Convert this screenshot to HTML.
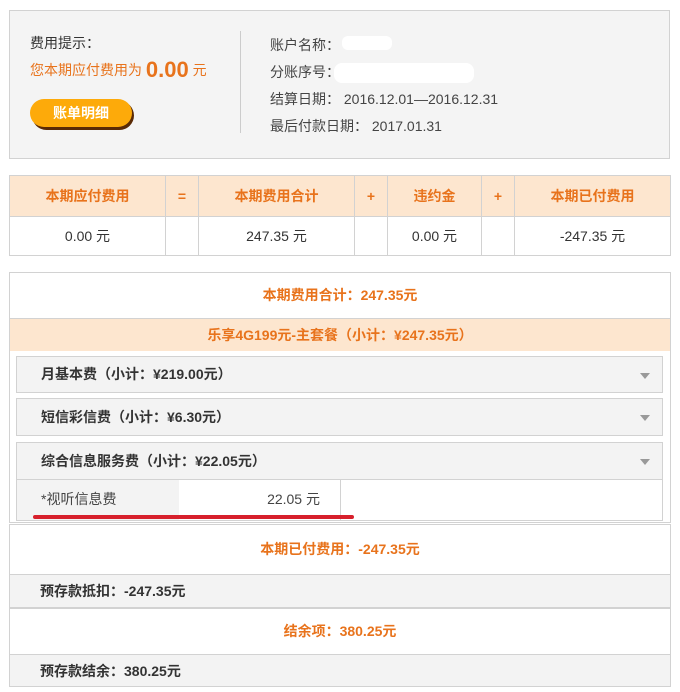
<!DOCTYPE html>
<html><head><meta charset="utf-8"><style>
*{margin:0;padding:0;box-sizing:border-box}
body{width:680px;height:692px;background:#fff;font-family:"Liberation Sans","Noto Sans CJK SC",sans-serif;font-size:14px;color:#333;position:relative;overflow:hidden}
.a{position:absolute}
.or{color:#e8731c}
.b{font-weight:bold}
.top{left:9px;top:10px;width:661px;height:149px;background:#f4f4f4;border:1px solid #d2d2d2}
table{border-collapse:collapse;position:absolute;left:9px;top:175px;width:662px}
td{border:1px solid #d2d2d2;text-align:center;font-size:14px}
tr.h td{background:#fde6cf;color:#e8731c;font-weight:bold;height:41px}
tr.v td{height:39px;color:#333}
.box{left:9px;width:662px;border:1px solid #d2d2d2}
.row{position:absolute;left:0;right:0;text-align:center;font-weight:bold;color:#e8731c;font-size:14px}
.acc{position:absolute;left:16px;width:647px;background:#f3f3f3;border:1px solid #d2d2d2;font-weight:bold;font-size:14px;color:#333;padding-left:24px}
.tri{position:absolute;right:12px;top:16px;width:0;height:0;border-left:5px solid transparent;border-right:5px solid transparent;border-top:6px solid #999}
.gr{position:absolute;left:0;right:0;background:#f3f3f3;font-weight:bold;font-size:14px;color:#333;padding-left:30px}
</style></head><body>
<div class="a top"></div>
<div class="a" style="left:30px;top:33px">费用提示：</div>
<div class="a or" style="left:30px;top:59px;font-size:14px;line-height:22px">您本期应付费用为 <span class="b" style="font-size:22px;vertical-align:-2px">0.00</span> 元</div>
<div class="a" style="left:32px;top:101px;width:102px;height:29px;border-radius:15px;background:#5a2a05"></div>
<div class="a" style="left:30px;top:99px;width:102px;height:28px;border-radius:14px;background:#fdaa0a;color:#fff;font-weight:bold;text-align:center;line-height:28px;font-size:14px">账单明细</div>
<div class="a" style="left:240px;top:31px;width:1px;height:102px;background:#ccc"></div>
<div class="a" style="left:270px;top:32px;line-height:27px;color:#444">账户名称：<br>分账序号：<br>结算日期： 2016.12.01—2016.12.31<br>最后付款日期： 2017.01.31</div>
<div class="a" style="left:342px;top:36px;width:50px;height:14px;background:#fff;border-radius:6px"></div>
<div class="a" style="left:334px;top:63px;width:140px;height:20px;background:#fff;border-radius:8px"></div>
<table>
<tr class="h"><td style="width:156px">本期应付费用</td><td style="width:33px">=</td><td style="width:156px">本期费用合计</td><td style="width:33px">+</td><td style="width:94px">违约金</td><td style="width:33px">+</td><td>本期已付费用</td></tr>
<tr class="v"><td>0.00 元</td><td></td><td>247.35 元</td><td></td><td>0.00 元</td><td></td><td>-247.35 元</td></tr>
</table>
<div class="a box" style="top:272px;height:251px">
<div class="row" style="top:0;height:45px;line-height:45px">本期费用合计：247.35元</div>
<div class="row" style="top:45px;height:33px;line-height:33px;background:#fde6cf;border-top:1px solid #d2d2d2">乐享4G199元-主套餐（小计：¥247.35元）</div>
</div>
<div class="acc" style="top:356px;height:37px;line-height:35px">月基本费（小计：¥219.00元）<div class="tri"></div></div>
<div class="acc" style="top:398px;height:38px;line-height:36px">短信彩信费（小计：¥6.30元）<div class="tri"></div></div>
<div class="acc" style="top:442px;height:79px;line-height:36px">综合信息服务费（小计：¥22.05元）<div class="tri"></div>
<div class="a" style="left:0;top:36px;width:645px;height:41px;background:#fff;border-top:1px solid #d2d2d2;font-weight:normal;font-size:14px">
<div class="a" style="left:0;top:0;width:162px;height:40px;background:#f3f3f3;padding-left:24px;line-height:38px;color:#444">*视听信息费</div>
<div class="a" style="left:162px;top:0;width:162px;height:40px;border-right:1px solid #d2d2d2;text-align:right;padding-right:20px;line-height:38px;color:#444">22.05 元</div>
</div></div>
<div class="a" style="left:33px;top:515px;width:321px;height:4px;background:#d7202c;border-radius:2px"></div>
<div class="a box" style="top:524px;height:84px;border-bottom:2px solid #d2d2d2">
<div class="row" style="top:0;height:49px;line-height:49px">本期已付费用：-247.35元</div>
<div class="gr" style="top:49px;height:33px;line-height:33px;border-top:1px solid #d2d2d2">预存款抵扣：-247.35元</div>
</div>
<div class="a box" style="top:608px;height:79px">
<div class="row" style="top:0;height:45px;line-height:45px">结余项：380.25元</div>
<div class="gr" style="top:45px;height:32px;line-height:32px;border-top:1px solid #d2d2d2">预存款结余：380.25元</div>
</div>
</body></html>
